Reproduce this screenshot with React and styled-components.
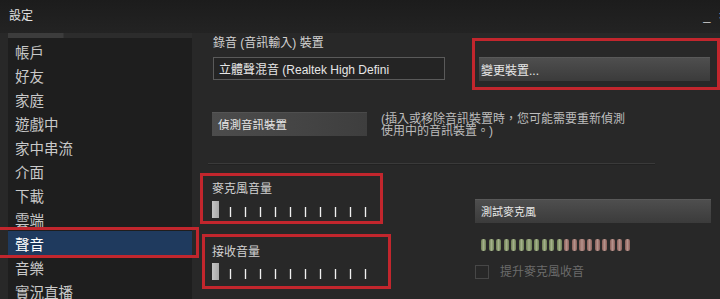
import React from "react";
import styled, { createGlobalStyle } from "styled-components";

const Global = createGlobalStyle`
  html, body { margin: 0; padding: 0; background: #282828; }
  body { width: 720px; height: 299px; overflow: hidden; }
  * { box-sizing: border-box; }
`;

const FONT = `"Liberation Sans", "Noto Sans CJK TC", sans-serif`;
const RED = "#c2262d";

const Window = styled.div`
  width: 720px;
  height: 299px;
  display: flex;
  flex-direction: column;
  background: #282828;
  font-family: ${FONT};
  color: #d8d8d8;
  overflow: hidden;
`;

const TitleBar = styled.div`
  height: 33px;
  flex: none;
  display: flex;
  align-items: flex-start;
  padding: 9px 0 0 9px;
  background: linear-gradient(#1c1c1c, #232323);
`;

const Title = styled.div`
  font-size: 12px;
  line-height: 14px;
  color: #e4e4e4;
`;

const WinControls = styled.div`
  margin-left: auto;
  display: flex;
  gap: 8px;
  font-size: 13px;
  line-height: 14px;
  color: #cfcfcf;
  margin-right: -6px;
`;

const Body = styled.div`
  flex: 1;
  display: flex;
  min-height: 0;
`;

const Sidebar = styled.div`
  margin-left: 8px;
  width: 184px;
  flex: none;
  background: #1e1e1e;
  display: flex;
  flex-direction: column;
`;

const SideStrip = styled.div`
  height: 5px;
  flex: none;
  background: linear-gradient(90deg, #3c3c3c 0, #3c3c3c 55px, #2c2c2c 56px, #2c2c2c);
  margin-bottom: 1px;
`;

const NavItem = styled.div`
  position: relative;
  height: 24px;
  flex: none;
  display: flex;
  align-items: center;
  padding-left: 7px;
  font-family: "Noto Sans CJK TC", sans-serif;
  font-size: 14.5px;
  color: ${(p) => (p.$active ? "#ffffff" : "#c9c9c9")};
  background: ${(p) => (p.$active ? "#1f3a5e" : "transparent")};
  &::after {
    content: "";
    display: ${(p) => (p.$active ? "block" : "none")};
    position: absolute;
    top: -4px;
    bottom: -3px;
    left: -12px;
    right: -7px;
    border: 3px solid ${RED};
  }
`;

const Main = styled.div`
  flex: 1;
  display: flex;
  flex-direction: column;
  min-width: 0;
`;

const TopRow = styled.div`
  display: flex;
  align-items: flex-start;
`;

const DeviceCol = styled.div`
  margin-left: 21px;
  width: 232px;
  padding-top: 3px;
  display: flex;
  flex-direction: column;
`;

const Label = styled.div`
  font-size: 12px;
  line-height: 14px;
  color: ${(p) => p.$color || "#d2d2d2"};
`;

const Input = styled.div`
  margin-top: 7px;
  height: 23px;
  border: 1px solid #5a5a5a;
  background: #242424;
  display: flex;
  align-items: center;
  padding-left: 5px;
  font-size: 12px;
  color: #e6e6e6;
  white-space: nowrap;
  overflow: hidden;
`;

const RedBox = styled.div`
  border: 3px solid ${RED};
  flex: none;
  display: flex;
  flex-direction: column;
`;

const ChangeBox = styled(RedBox)`
  margin-left: 27px;
  margin-top: 5px;
  width: 248px;
  height: 52px;
  padding: 16px 7px 0 4px;
`;

const Button = styled.div`
  height: 24px;
  flex: none;
  display: flex;
  align-items: center;
  padding-left: ${(p) => p.$pad || 3}px;
  font-size: ${(p) => p.$size || 12}px;
  color: #e8e8e8;
  background: linear-gradient(#4f4f4f, #3b3b3b);
  box-shadow: inset 0 1px 0 rgba(255, 255, 255, 0.06);
`;

const DetectRow = styled.div`
  margin-top: 22px;
  display: flex;
  align-items: flex-start;
`;

const DetectButton = styled(Button)`
  margin-left: 20px;
  width: 155px;
  background: linear-gradient(90deg, #4c4c4c, #444444 60%, #3e3e3e);
`;

const Note = styled.div`
  margin-left: 14px;
  margin-top: 1px;
  font-size: 12px;
  line-height: 12px;
  color: #bdbdbd;
`;

const Separator = styled.div`
  margin: 26px 0 0 16px;
  width: 447px;
  height: 2px;
  border-top: 1px solid #3a3a3a;
  border-bottom: 1px solid #222;
`;

const LowerRow = styled.div`
  display: flex;
`;

const VolCol = styled.div`
  width: 280px;
  flex: none;
  display: flex;
  flex-direction: column;
`;

const VolBox = styled(RedBox)`
  margin-left: ${(p) => p.$ml}px;
  margin-top: ${(p) => p.$mt}px;
  width: ${(p) => p.$w}px;
  height: ${(p) => p.$h}px;
  padding: ${(p) => p.$pt}px 0 0 ${(p) => p.$pl}px;
`;

const Slider = styled.div`
  margin-top: ${(p) => p.$mt}px;
  height: 17px;
  display: flex;
  align-items: center;
`;

const Thumb = styled.div`
  width: 7px;
  height: 17px;
  background: linear-gradient(90deg, #c4c4c4, #a8a8a8);
  margin-right: 10px;
`;

const Tick = styled.div`
  width: 3px;
  height: 10px;
  margin-top: 5px;
  margin-right: 12px;
  background: linear-gradient(90deg, #4a4a4a 0 1px, #f0f0f0 1px 2px, #4a4a4a 2px);
`;

const TestCol = styled.div`
  display: flex;
  flex-direction: column;
`;

const TestButton = styled(Button)`
  margin: 34px 0 0 3px;
  width: 236px;
  padding-left: 6px;
`;

const Meter = styled.div`
  margin: 16px 0 0 9px;
  width: 149px;
  height: 12px;
  display: grid;
  grid-template-columns: repeat(20, 1fr);
  gap: 2.5px;
`;

const Seg = styled.div`
  border-radius: 2px;
  background: ${(p) =>
    p.$hot
      ? "linear-gradient(90deg, #8a5e58, #b4928b 50%, #8a5e58)"
      : "linear-gradient(90deg, #6c7f52, #a3b08a 50%, #6c7f52)"};
`;

const CheckRow = styled.div`
  margin: 14px 0 0 3px;
  display: flex;
  align-items: center;
`;

const CheckBox = styled.div`
  width: 14px;
  height: 14px;
  border: 1px solid #474747;
  margin-right: 11px;
`;

const navItems = ["帳戶", "好友", "家庭", "遊戲中", "家中串流", "介面", "下載", "雲端", "聲音", "音樂", "實況直播"];

function VolSlider({ mt }) {
  return (
    <Slider $mt={mt}>
      <Thumb />
      {Array.from({ length: 10 }).map((_, i) => (
        <Tick key={i} />
      ))}
    </Slider>
  );
}

export default function App() {
  return (
    <>
      <Global />
      <Window>
        <TitleBar>
          <Title>設定</Title>
          <WinControls>
            <span>_</span>
            <span>×</span>
          </WinControls>
        </TitleBar>
        <Body>
          <Sidebar>
            <SideStrip />
            {navItems.map((n) => (
              <NavItem key={n} $active={n === "聲音"}>
                {n}
              </NavItem>
            ))}
          </Sidebar>
          <Main>
            <TopRow>
              <DeviceCol>
                <Label>錄音 (音訊輸入) 裝置</Label>
                <Input>立體聲混音 (Realtek High Defini</Input>
              </DeviceCol>
              <ChangeBox>
                <Button $pad={2}>變更裝置...</Button>
              </ChangeBox>
            </TopRow>
            <DetectRow>
              <DetectButton $pad={6} $size={11.5}>偵測音訊裝置</DetectButton>
              <Note>
                (插入或移除音訊裝置時，您可能需要重新偵測
                <br />
                使用中的音訊裝置。)
              </Note>
            </DetectRow>
            <Separator />
            <LowerRow>
              <VolCol>
                <VolBox $ml={8} $mt={8} $w={183} $h={51} $pt={6} $pl={9}>
                  <Label>麥克風音量</Label>
                  <VolSlider mt={5} />
                </VolBox>
                <VolBox $ml={10} $mt={10} $w={189} $h={55} $pt={8} $pl={7}>
                  <Label>接收音量</Label>
                  <VolSlider mt={4} />
                </VolBox>
              </VolCol>
              <TestCol>
                <TestButton $size={11}>測試麥克風</TestButton>
                <Meter>
                  {Array.from({ length: 20 }).map((_, i) => (
                    <Seg key={i} $hot={i >= 11} />
                  ))}
                </Meter>
                <CheckRow>
                  <CheckBox />
                  <Label $color="#6c6c6c">提升麥克風收音</Label>
                </CheckRow>
              </TestCol>
            </LowerRow>
          </Main>
        </Body>
      </Window>
    </>
  );
}
